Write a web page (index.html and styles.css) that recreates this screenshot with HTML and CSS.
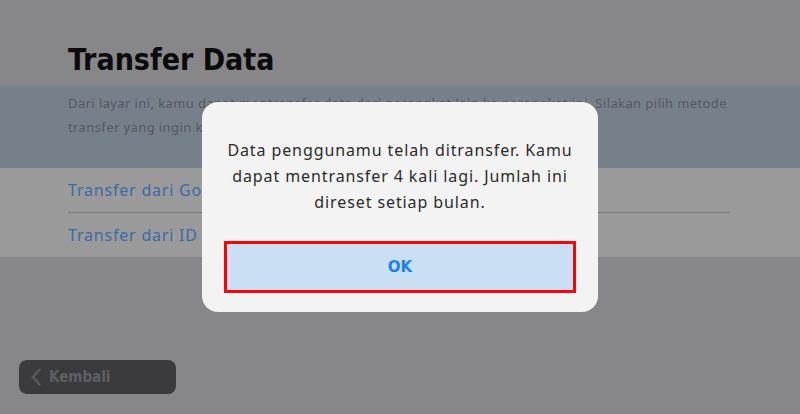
FILE: index.html
```html
<!DOCTYPE html>
<html lang="id">
<head>
    <meta charset="UTF-8">
    <meta name="viewport" content="width=device-width, initial-scale=1.0">
    <title>Transfer Data</title>
    <link rel="stylesheet" href="styles.css">
</head>
<body>
    <div class="page">
        <div class="header">
            <h1>Transfer Data</h1>
        </div>
        <div class="intro">
            Dari layar ini, kamu dapat mentransfer data dari perangkat lain ke perangkat ini. Silakan pilih metode<br>
            transfer yang ingin kamu gunakan.
        </div>
        <div class="options">
            <div class="option">Transfer dari Google Play Games</div>
            <div class="option">Transfer dari ID</div>
        </div>
        <div class="footer">
            <button class="back-btn">
                <svg width="12" height="20" viewBox="0 0 12 20"><path d="M10 2 L3 10 L10 18" fill="none" stroke="#5a5a5d" stroke-width="2.4"/></svg>
                Kembali
            </button>
        </div>
    </div>

    <!-- DIALOG -->
    <div class="dialog">
        <p class="dialog-text">Data penggunamu telah ditransfer. Kamu dapat mentransfer 4 kali lagi. Jumlah ini direset setiap bulan.</p>
        <div class="ok-frame">
            <button class="ok-btn">OK</button>
        </div>
    </div>
</body>
</html>
```

FILE: styles.css
```css
body {
    margin: 0;
    font-family: "Noto Sans", "DejaVu Sans", sans-serif;
    background-color: #858589;
}
.page {
    width: 800px;
    height: 414px;
    background-color: #87878a;
    display: flex;
    flex-direction: column;
    overflow: hidden;
}
.header {
    height: 86px;
    padding: 0 68px;
    box-sizing: border-box;
}
h1 {
    margin: 0;
    padding-top: 40px;
    font-family: "DejaVu Sans Condensed", "DejaVu Sans", sans-serif;
    font-stretch: condensed;
    font-size: 30px;
    line-height: 40px;
    font-weight: bold;
    color: #0b0b0c;
}
.intro {
    height: 82px;
    box-sizing: border-box;
    padding: 5px 0 0 68px;
    background-color: #76808a;
    color: #555b63;
    font-size: 13px;
    line-height: 24px;
    letter-spacing: 0.4px;
    white-space: nowrap;
}
.options {
    height: 89px;
    background-color: #9a9a9a;
    padding: 0 68px;
}
.option {
    height: 44px;
    line-height: 44px;
    font-size: 16px;
    letter-spacing: 0.8px;
    color: #3b6aa6;
}
.option + .option {
    border-top: 1px solid #7d7d7f;
    width: 662px;
}
.footer {
    flex: 1;
    padding: 103px 0 0 19px;
}
.back-btn {
    width: 157px;
    height: 34px;
    background-color: #3b3b3d;
    border: none;
    border-radius: 8px;
    display: flex;
    align-items: center;
    gap: 7px;
    padding: 0 0 0 11px;
    font-family: "DejaVu Sans Condensed", "DejaVu Sans", sans-serif;
    font-stretch: condensed;
    font-size: 15px;
    font-weight: bold;
    color: #5f5f62;
}
.dialog {
    position: absolute;
    left: 202px;
    top: 102px;
    width: 396px;
    height: 210px;
    box-sizing: border-box;
    padding: 35px 22px 0;
    background-color: #f3f3f3;
    border-radius: 16px;
}
.dialog-text {
    margin: 0;
    text-align: center;
    font-size: 16px;
    line-height: 26px;
    letter-spacing: 0.9px;
    color: #2b2b2b;
}
.ok-frame {
    margin-top: 26px;
    border: 3px solid #ff0000;
    height: 46px;
}
.ok-btn {
    display: block;
    width: 100%;
    height: 100%;
    margin: 0;
    background-color: #cadff4;
    border: none;
    border-radius: 3px;
    font-family: "DejaVu Sans", sans-serif;
    font-size: 15px;
    font-weight: bold;
    color: #1c7ef0;
}
```
